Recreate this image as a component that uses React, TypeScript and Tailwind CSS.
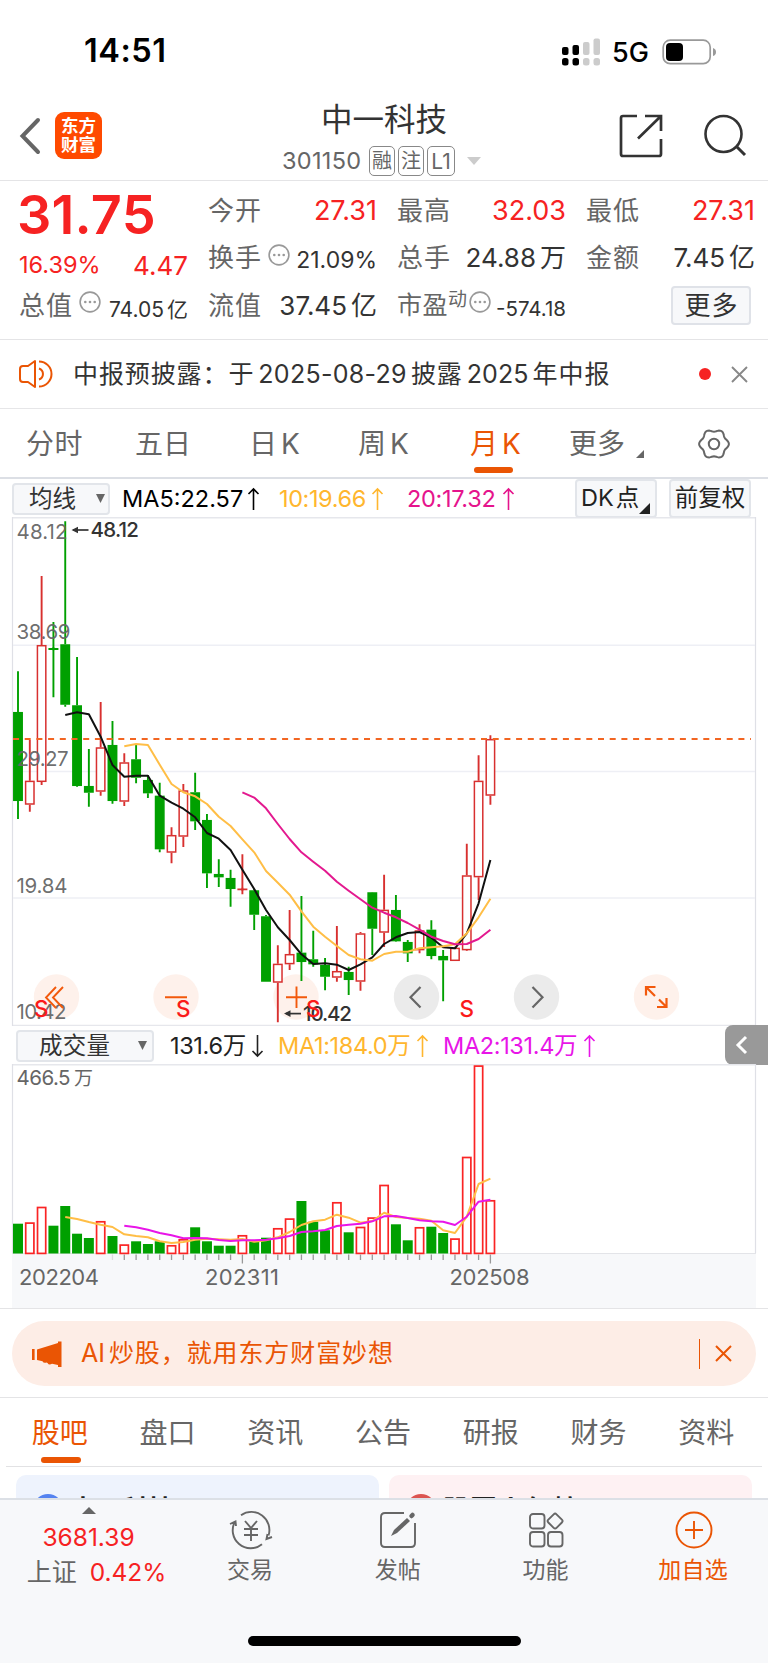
import React from "react";

type Candle = [up: 0 | 1, high: number, top: number, bottom: number, low: number];

const X0 = 18;
const STEP = 11.81;
const UP = "#d8302f";
const DOWN = "#00a000";

const CANDLES: Candle[] = [
  [0, 671.3, 712, 801, 819],
  [1, 740, 780.7, 804.7, 811.7],
  [1, 576, 645, 782, 785],
  [0, 622, 648.3, 649.7, 697.3],
  [0, 521.3, 644.3, 704.7, 706.7],
  [0, 657, 705.3, 786, 786.7],
  [0, 749, 786, 792.7, 806.7],
  [1, 702, 747.3, 791.7, 795.7],
  [0, 721, 745, 801, 803.7],
  [1, 753.3, 762.3, 801.7, 806],
  [0, 745, 759.3, 777.7, 783.3],
  [0, 775, 780, 793.3, 798],
  [0, 782.7, 795.7, 849.3, 852.3],
  [1, 827.3, 835, 852.7, 863.3],
  [1, 784, 790.3, 836.7, 847],
  [0, 772.7, 792.3, 821.3, 830],
  [0, 814, 820, 873.3, 888],
  [0, 859.3, 874, 877.3, 887],
  [0, 869.7, 878, 889, 906.7],
  [1, 854.3, 888.7, 890, 894.3],
  [0, 889, 890.3, 914.7, 930],
  [0, 915, 916.3, 981.7, 981.7],
  [1, 945.3, 963.7, 982.7, 1022.3],
  [1, 910, 954, 964.3, 970],
  [0, 896, 952.7, 962, 981],
  [0, 930.7, 959.3, 964.3, 966.7],
  [0, 958, 965, 976.7, 990.3],
  [1, 926, 971, 977.7, 981.7],
  [0, 966.7, 972, 980, 995],
  [1, 932, 933.3, 981.7, 990.7],
  [0, 892, 892.3, 928.7, 955],
  [1, 874.7, 909.7, 932.7, 947],
  [0, 895, 910, 941.3, 941.7],
  [0, 940, 942, 953.3, 962],
  [1, 924.3, 930.3, 950.3, 953.3],
  [0, 920.3, 929.7, 956, 959.3],
  [0, 950, 956, 960.3, 1001.3],
  [1, 946.7, 947.7, 961, 961],
  [1, 843.7, 875.3, 950.3, 951],
  [1, 755.3, 780.7, 877.3, 900],
  [1, 735.3, 739, 795.7, 804.7],
];

const VOLUMES: [0 | 1, number][] = [
  [0, 1223.7], [1, 1222.3], [1, 1206.7], [0, 1225.7], [0, 1206], [0, 1233.7], [0, 1238],
  [1, 1221], [0, 1236], [1, 1244.3], [0, 1241.3], [0, 1244], [0, 1241.3], [1, 1245],
  [1, 1239], [0, 1227.3], [0, 1241.3], [0, 1245.7], [0, 1245.7], [1, 1235], [0, 1241.3],
  [0, 1237.7], [1, 1228], [1, 1218.3], [0, 1201], [0, 1221.7], [0, 1230.3], [1, 1202],
  [0, 1232.3], [1, 1226.7], [1, 1217.3], [1, 1184.7], [0, 1224.3], [0, 1240.3], [1, 1227],
  [0, 1226.7], [0, 1233], [1, 1238.3], [1, 1156.7], [1, 1065.3], [1, 1200],
];

const MA5 = [
  715, 712.3, 714.3, 736.7, 765, 776.7, 775.7, 775.7, 795.7, 802.7, 808.7, 817.3, 833, 838.7,
  850, 869.7, 889, 910, 927.3, 940, 954.3, 964, 963.3, 964.7, 970, 964.3, 957.3, 944, 937.3,
  933, 932, 937.7, 947.3, 948.3, 933.3, 903.3, 860,
];
const MA10 = [
  746.3, 744, 745, 764.7, 784, 792.3, 796.3, 804, 816.7, 826, 839.3, 852.3, 871, 882.7, 894.7,
  911.3, 926.7, 936.7, 946, 955, 959.3, 960.7, 954, 951.7, 951.7, 948.3, 947.3, 946.3, 944.3,
  933.3, 917.3, 898.7,
];
const MA20 = [
  792.3, 797.6, 808.3, 824, 839, 852.3, 861.7, 870.7, 881.7, 890.7, 899.3, 907.7, 912.7, 917.3,
  923, 929.7, 936.7, 941, 944.3, 944, 939, 929.7,
];
const VMA5 = [
  1217, 1219, 1222, 1224.7, 1227, 1234.3, 1236, 1237.3, 1241.3, 1243, 1242, 1239.7, 1238.7,
  1239.3, 1239.7, 1239, 1241.7, 1240.3, 1237.3, 1232, 1225, 1221.3, 1219.7, 1214.7, 1217.7,
  1222.7, 1221, 1212.7, 1217, 1218, 1218.7, 1220.7, 1230.3, 1233, 1216.7, 1184, 1178.7,
];
const VMA10 = [
  1225.7, 1227.3, 1229.7, 1233, 1235.3, 1238.3, 1238, 1238.3, 1240, 1241, 1240.3, 1240.3,
  1239.7, 1238.3, 1236, 1232, 1231.3, 1230, 1226, 1224.7, 1223.7, 1221.3, 1216.3, 1216, 1218,
  1220.3, 1221.3, 1221.7, 1225, 1216.7, 1201.7, 1199.7,
];

const cx = (i: number) => X0 + i * STEP;

// six-lobed outline of the settings gear
const GEAR = Array.from({ length: 72 }, (_, i) => {
  const a = (i * Math.PI) / 36;
  const r = 13.6 + 1.3 * Math.cos(6 * a);
  return `${(16 + r * Math.cos(a)).toFixed(2)},${(16 + r * Math.sin(a)).toFixed(2)}`;
}).join(" ");

function Line({ data, start, color }: { data: number[]; start: number; color: string }) {
  return (
    <polyline
      points={data.map((y, i) => `${cx(start + i)},${y}`).join(" ")}
      fill="none"
      stroke={color}
      strokeWidth={2}
      strokeLinejoin="round"
    />
  );
}

function Arrow({ down = false }: { down?: boolean }) {
  return (
    <svg width="13" height="24" viewBox="0 0 13 24" className={down ? "rotate-180" : ""}>
      <path d="M6.5 23V2M1.500 7L6.500 2l5 5" fill="none" stroke="currentColor" strokeWidth="1.600" />
    </svg>
  );
}

function Dots() {
  return (
    <svg width="22" height="22" viewBox="0 0 22 22" className="shrink-0">
      <circle cx="11" cy="11" r="9.900" fill="none" stroke="#999" strokeWidth="1.600" />
      <circle cx="6.300" cy="11" r="1.300" fill="#999" />
      <circle cx="11" cy="11" r="1.300" fill="#999" />
      <circle cx="15.700" cy="11" r="1.300" fill="#999" />
    </svg>
  );
}

function StatusBar() {
  return (
    <div className="flex h-[92px] items-center pt-[11px] pl-[84px]">
      <span className="w-[84px] text-[32.5px] leading-none font-semibold tracking-[0.5px] text-black">14:51</span>
      <svg width="40" height="28" viewBox="0 0 40 28" className="ml-[393px]">
        <g fill="#000">
          <rect x="1" y="9" width="6.500" height="8" rx="2" />
          <rect x="11.500" y="7" width="6.500" height="10" rx="2" />
          <rect x="1" y="20" width="6.500" height="7.500" rx="2.500" />
          <rect x="11.500" y="20" width="6.500" height="7.500" rx="2.500" />
        </g>
        <g fill="#ccc">
          <rect x="22" y="4" width="6.500" height="13" rx="2" />
          <rect x="32.500" y="0.500" width="6.500" height="16.500" rx="2" />
          <rect x="22" y="20" width="6.500" height="7.500" rx="2.500" />
          <rect x="32.500" y="20" width="6.500" height="7.500" rx="2.500" />
        </g>
      </svg>
      <span className="ml-[11px] w-[38px] pt-px text-[27px] leading-none font-medium text-black">5G</span>
      <svg width="55" height="26" viewBox="0 0 55 26" className="ml-[12px]">
        <rect x="1.200" y="1.200" width="47" height="23.500" rx="7" fill="none" stroke="#999" strokeWidth="1.700" />
        <rect x="4" y="4" width="17" height="18" rx="4" fill="#000" />
        <path d="M51 9v8q3-1 3-4t-3-4z" fill="#999" />
      </svg>
    </div>
  );
}

function Header() {
  return (
    <header className="flex h-[89px] items-center border-b border-[#e4e4e6]">
      <svg width="24" height="38" viewBox="0 0 24 38" className="ml-[18px]">
        <path d="M20 3L4.500 19 20 35" fill="none" stroke="#666" strokeWidth="4" strokeLinecap="round" />
      </svg>
      <div className="mb-[2px] ml-[13px] flex size-[47px] flex-col items-center justify-center rounded-[9px] bg-[#ff4a00] text-[17.500px] leading-[19.500px] font-bold text-white">
        <span>东方</span>
        <span>财富</span>
      </div>
      <div className="ml-[180px] flex h-full w-[204px] flex-col">
        <h1 className="mt-[10px] text-center text-[31.500px] leading-[35px] text-[#333]">中一科技</h1>
        <div className="mt-[9px] flex h-[30px] items-center text-[#666]">
          <span className="w-[87px] text-[23.500px] leading-none tracking-[0.3px]">301150</span>
          <span className="flex h-[30px] w-[26px] items-center justify-center rounded-[5px] border-[1.500px] border-[#888] text-[20px] leading-none">融</span>
          <span className="ml-[3px] flex h-[30px] w-[26px] items-center justify-center rounded-[5px] border-[1.500px] border-[#888] text-[20px] leading-none">注</span>
          <span className="ml-[3px] flex h-[30px] w-[28px] items-center justify-center rounded-[5px] border-[1.500px] border-[#888] text-[21px] leading-none">L1</span>
          <svg width="14" height="8" viewBox="0 0 14 8" className="ml-[12px] shrink-0">
            <path d="M0 0h14L7 8z" fill="#ccc" />
          </svg>
        </div>
      </div>
      <svg width="44" height="44" viewBox="0 0 44 44" className="ml-[133px]">
        <path d="M18 2H4Q2 2 2 4v36q0 2 2 2h36q2 0 2-2V25M26 2h16v15M42 2L19 24.500" fill="none" stroke="#333" strokeWidth="2.700" />
      </svg>
      <svg width="44" height="44" viewBox="0 0 44 44" className="ml-[40px]">
        <circle cx="20.500" cy="20" r="18" fill="none" stroke="#333" strokeWidth="2.600" />
        <path d="M33 32l9 9" stroke="#333" strokeWidth="3" />
      </svg>
    </header>
  );
}

function Quote() {
  return (
    <section className="grid h-[159px] grid-cols-4 grid-rows-[47px_48px_47px] gap-x-[20px] border-b border-[#e4e4e6] pt-[6px] pr-[13px] pl-[19px] text-[26px] leading-none text-[#333] *:flex *:items-center *:justify-between">
      <div>
        <span className="-ml-[2px] pt-[9px] text-[54px] font-semibold tracking-[0.2px] text-[#f62222]">31.75</span>
      </div>
      <div>
        <span className="tracking-[1px] text-[#666]">今开</span>
        <span className="text-[27px] text-[#f62222]">27.31</span>
      </div>
      <div>
        <span className="tracking-[1px] text-[#666]">最高</span>
        <span className="text-[27px] text-[#f62222]">32.03</span>
      </div>
      <div>
        <span className="tracking-[1px] text-[#666]">最低</span>
        <span className="text-[27px] text-[#f62222]">27.31</span>
      </div>

      <div className="text-[#f62222]">
        <span className="pt-[13px] text-[23.500px]">16.39%</span>
        <span className="pt-[15px]">4.47</span>
      </div>
      <div>
        <span className="flex items-center gap-[6px] tracking-[1px] text-[#666]">换手<i className="mb-[7px]"><Dots /></i></span>
        <span className="pt-[5px] text-[23px]">21.09%</span>
      </div>
      <div>
        <span className="tracking-[1px] text-[#666]">总手</span>
        <span className="flex gap-[4px]">24.88<span>万</span></span>
      </div>
      <div>
        <span className="tracking-[1px] text-[#666]">金额</span>
        <span className="flex gap-[4px]">7.45<span>亿</span></span>
      </div>

      <div>
        <span className="flex items-center gap-[6px] tracking-[1px] text-[#666]">总值<i className="mb-[7px]"><Dots /></i></span>
        <span className="flex gap-[3px] pt-[8px] text-[21px]">74.05<span>亿</span></span>
      </div>
      <div>
        <span className="tracking-[1px] text-[#666]">流值</span>
        <span className="flex gap-[4px]">37.45<span>亿</span></span>
      </div>
      <div>
        <span className="flex items-center text-[25px] tracking-[0.5px] text-[#666]">
          市盈<span className="mr-px mb-[13px] text-[19px]">动</span><i className="mb-[7px]"><Dots /></i>
        </span>
        <span className="pt-[8px] text-[20.500px]">-574.18</span>
      </div>
      <div>
        <span />
        <button className="mr-[4px] h-[39px] w-[80px] rounded-[4px] border-2 border-[#dfe2e8] bg-[#f7f8fa] pl-px tracking-[1px]">更多</button>
      </div>
    </section>
  );
}

function Notice() {
  return (
    <section className="flex h-[69px] items-center border-b border-[#e6e6e8] pl-[19px] text-[25px] leading-none text-[#333]">
      <svg width="34" height="30" viewBox="0 0 34 30" fill="none" stroke="#ea5504" strokeWidth="2">
        <path d="M16 2v26L9 23H4q-3 0-3-3V10q0-3 3-3h5z" strokeLinejoin="round" />
        <path d="M20 2.500a12.500 12.500 0 0 1 0 25M20 9.500a5.800 5.800 0 0 1 0 11" />
      </svg>
      <p className="ml-[20px] flex w-[600px] tracking-[0.900px]">
        <span>中报预披露：于</span>
        <span className="ml-[4px] tracking-[0.300px]">2025-08-29</span>
        <span className="ml-[4px]">披露</span>
        <span className="ml-[4px] tracking-[0.100px]">2025</span>
        <span className="ml-[4px]">年中报</span>
      </p>
      <span className="ml-[26px] size-[12px] rounded-full bg-[#f62222]" />
      <svg width="17" height="17" viewBox="0 0 17 17" className="ml-[20px]">
        <path d="M1 1l15 15M16 1L1 16" stroke="#888" strokeWidth="1.900" />
      </svg>
    </section>
  );
}

function PeriodTabs() {
  return (
    <nav className="flex h-[70px] items-center border-b-2 border-[#dcdfe5] pt-px text-[28px] leading-none text-[#666] *:flex">
      <span className="ml-[26px] w-[109px] tracking-[0.500px]">分时</span>
      <span className="w-[114px]">五日</span>
      <span className="w-[109px] gap-[4px]">日<span>K</span></span>
      <span className="w-[112px] gap-[4px]">周<span>K</span></span>
      <span className="relative w-[99px] gap-[4px] text-[#ea5504]">
        月<span>K</span>
        <i className="absolute top-[37.500px] left-[4px] h-[6px] w-[39px] rounded-full bg-[#ea5504]" />
      </span>
      <span className="w-[129px]">
        更多
        <svg width="8" height="8" viewBox="0 0 8 8" className="mt-[20px] ml-[11px]">
          <path d="M8 0v8H0z" fill="#666" />
        </svg>
      </span>
      <svg width="32" height="32" viewBox="0 0 32 32" fill="none" stroke="#666" strokeWidth="2">
        <polygon points={GEAR} />
        <circle cx="16" cy="16" r="5.200" />
      </svg>
    </nav>
  );
}

function ChartToolbar() {
  return (
    <div className="flex h-[38px] items-center pl-[12px] text-[23.500px] leading-none">
      <button className="mt-px flex h-[32px] w-[98px] items-center rounded-[4px] border-2 border-[#e2e5ea] bg-[#f7f8fa] pl-[15px] text-[#333]">
        均线
        <svg width="9" height="9" viewBox="0 0 9 9" className="ml-[20px]">
          <path d="M0 0h9L4.500 9z" fill="#666" />
        </svg>
      </button>
      <span className="mt-px ml-[12px] flex w-[157px] items-center gap-[4px] text-black">MA5:22.57<Arrow /></span>
      <span className="mt-px flex w-[128px] items-center gap-[5px] tracking-[-0.400px] text-[#ffb62e]">10:19.66<Arrow /></span>
      <span className="mt-px flex w-[168px] items-center gap-[7px] tracking-[-0.300px] text-[#e5148c]">20:17.32<Arrow /></span>
      <button className="flex h-[39px] w-[82px] items-center rounded-[4px] border-2 border-[#e2e5ea] bg-[#f7f8fa] pl-[4px] text-[#222]">
        DK<span className="ml-[2px]">点</span>
        <svg width="11" height="11" viewBox="0 0 11 11" className="mt-[20px]">
          <path d="M11 0v11H0z" fill="#222" />
        </svg>
      </button>
      <button className="ml-[12px] h-[39px] w-[82px] rounded-[4px] border-2 border-[#e2e5ea] bg-[#f7f8fa] text-[#222]">前复权</button>
    </div>
  );
}

function PriceChart() {
  return (
    <svg width="746" height="509" viewBox="11 517 746 509" className="ml-[11px] block shrink-0">
      <path d="M12 517.800H756M12 1025.500H756" stroke="#e6e7ec" strokeWidth="1.600" />
      <path d="M12.500 517V1026M755.500 517V1026" stroke="#dfe0e6" strokeWidth="1.200" />
      <path d="M13 645.300H755M13 771.500H755M13 898H755" stroke="#eeeff5" strokeWidth="1.500" />
      {[56.5, 176, 296, 656.5].map((x) => (
        <circle key={x} cx={x} cy="997" r="22.700" fill="#fef1eb" />
      ))}
      <circle cx="416.500" cy="997" r="22.700" fill="#ebebeb" />
      <circle cx="536.500" cy="997" r="22.700" fill="#ebebeb" />

      {CANDLES.map(([up, high, top, bottom, low], i) => {
        const color = up ? UP : DOWN;
        const thin = bottom - top < 2;
        return (
          <g key={i} stroke={color} strokeWidth="1.900">
            <path d={`M${cx(i)} ${high}V${top}M${cx(i)} ${bottom}V${low}`} />
            {thin ? (
              <path d={`M${cx(i) - 5} ${(top + bottom) / 2}h10M${cx(i)} ${top - 1}v3`} />
            ) : (
              <rect
                x={cx(i) - 4.2}
                y={top + 0.7}
                width="8.400"
                height={bottom - top - 1.4}
                fill={up ? "#fff" : color}
                strokeWidth="1.500"
              />
            )}
          </g>
        );
      })}

      <g fill="#666" fillOpacity="0.950" fontSize="20.500">
        <text x="16.500" y="539" textLength="51">48.12</text>
        <text x="16.500" y="639" textLength="54">38.69</text>
        <text x="16.500" y="765.500" textLength="52">29.27</text>
        <text x="16.500" y="892.500" textLength="51">19.84</text>
        <text x="16.500" y="1018.500" textLength="50">10.42</text>
      </g>

      <path d="M13 739H751" stroke="#f26522" strokeWidth="1.900" strokeDasharray="6 5.700" />
      <Line data={MA5} start={4} color="#111" />
      <Line data={MA10} start={9} color="#ffbe46" />
      <Line data={MA20} start={19} color="#e3198f" />

      <g fill="none" stroke="#333" strokeWidth="1.700">
        <path d="M73 530H88.500" />
        <path d="M286 1013.600H301" />
      </g>
      <path d="M71.500 530l6.500-3.300v6.600zM284 1013.600l6.500-3.300v6.600z" fill="#333" />
      <g fill="#333" fontSize="20.500" fontWeight="500">
        <text x="90.500" y="537" textLength="48.500">48.12</text>
        <text x="303" y="1021" textLength="49">10.42</text>
      </g>

      <g fill="none" stroke="#f2590c" strokeWidth="1.900">
        <path d="M56 987L46 997.500 56 1008M63 987L53 997.500 63 1008" />
        <path d="M165 997.300H187M286 997.300H307M296.500 986.500V1008" />
        <path d="M655 996L647 988M646 995.500V987H655.500M659 999.500L666.500 1007M657 1007H666.500V998" strokeWidth="2.200" />
      </g>
      <g fill="none" stroke="#666" strokeWidth="2.200">
        <path d="M420.500 987L410.500 997.300 420.500 1007.500M532.500 987L542.500 997.300 532.500 1007.500" />
      </g>
      <g fill="#fb1a1a" fontSize="22.500" fontWeight="500">
        <text x="34" y="1017">S</text>
        <text x="176" y="1017">S</text>
        <text x="306" y="1017">S</text>
        <text x="459.500" y="1017">S</text>
      </g>
    </svg>
  );
}

function VolumeToolbar() {
  return (
    <div className="flex h-[38px] items-center pl-[16px] text-[23.500px] leading-none tracking-[-0.350px]">
      <button className="mt-px flex h-[32px] w-[138px] items-center rounded-[4px] border-2 border-[#e2e5ea] bg-[#f7f8fa] pl-[21px] tracking-[0.200px] text-[#333]">
        成交量
        <svg width="9" height="9" viewBox="0 0 9 9" className="ml-[28px]">
          <path d="M0 0h9L4.500 9z" fill="#666" />
        </svg>
      </button>
      <span className="mt-px ml-[16px] flex w-[108px] items-center gap-[5px] text-[#222]">131.6万<Arrow down /></span>
      <span className="mt-px flex w-[165px] items-center gap-[6px] text-[#ffb62e]">MA1:184.0万<Arrow /></span>
      <span className="mt-px flex w-[282px] items-center gap-[6px] text-[#e815e8]">MA2:131.4万<Arrow /></span>
      <span className="flex h-[40px] w-[43px] shrink-0 items-center rounded-l-[8px] bg-[#999] pl-[10px]">
        <svg width="13" height="20" viewBox="0 0 13 20">
          <path d="M11 2L3 10l8 8" fill="none" stroke="#fff" strokeWidth="3" />
        </svg>
      </span>
    </div>
  );
}

function VolumeChart() {
  return (
    <svg width="746" height="244" viewBox="11 1064 746 244" className="ml-[11px] block shrink-0">
      <rect x="12" y="1253.500" width="744" height="55" fill="#f7f8fa" />
      <path d="M12 1064.700H756" stroke="#e6e7ec" strokeWidth="1.500" />
      <path d="M12.500 1064V1253M755.500 1064V1253" stroke="#dfe0e6" strokeWidth="1.200" />
      <path d="M12 1253.500H756" stroke="#e3e4e8" />
      <g fill="#666" fontSize="20.500">
        <text x="16.500" y="1085" textLength="54">466.5</text>
        <text x="74" y="1085" fontSize="19">万</text>
      </g>
      {VOLUMES.map(([up, top], i) =>
        up ? (
          <rect key={i} x={cx(i) - 4.1} y={top + 0.8} width="8.200" height={1252.6 - top} fill="#fff" stroke="#fa2424" strokeWidth="1.700" />
        ) : (
          <rect key={i} x={cx(i) - 5} y={top} width="10" height={1253.5 - top} fill={DOWN} />
        ),
      )}
      <Line data={VMA5} start={4} color="#ffbe46" />
      <Line data={VMA10} start={9} color="#e815e8" />
      {Array.from({ length: 33 }, (_, k) => k + 8).map((i) => (
        <path
          key={i}
          d={`M${cx(i)} 1254.500V${i === 19 || i === 40 ? 1263.5 : 1260}`}
          stroke={i === 8 ? "#ddd" : "#999"}
          strokeWidth="1.300"
        />
      ))}
      <g fill="#666" fontSize="22">
        <text x="19" y="1285" textLength="80">202204</text>
        <text x="205" y="1285" textLength="74">202311</text>
        <text x="449.500" y="1285" textLength="80">202508</text>
      </g>
    </svg>
  );
}

function Banner() {
  return (
    <section className="border-y border-[#e4e4e6] px-[12px] pt-[12px] pb-[11px]">
      <div className="flex h-[65px] items-center rounded-full bg-[#fdede6] pl-[20px] text-[25px] leading-none text-[#ea5504]">
        <svg width="30" height="26" viewBox="0 0 30 26" fill="#ea5504">
          <rect x="0" y="8" width="2.600" height="11" />
          <path d="M5 8.500L26 2V.500h3.500V26H26v-2l-6-1.300q-3 2-4.500-.8l-1-.4q-3 1-4-1.300L5 19z" />
        </svg>
        <span className="ml-[19px]">AI</span>
        <span className="ml-[4px] tracking-[0.900px]">炒股，就用东方财富妙想</span>
        <i className="ml-auto h-[30px] w-[1.500px] bg-[#ea5504]" />
        <svg width="17" height="17" viewBox="0 0 17 17" className="mr-[24px] ml-[15px]">
          <path d="M1 1l15 15M16 1L1 16" stroke="#ea5504" strokeWidth="2" />
        </svg>
      </div>
    </section>
  );
}

const SECTIONS = ["股吧", "盘口", "资讯", "公告", "研报", "财务", "资料"];

function SectionTabs() {
  return (
    <nav className="mx-[6px] flex h-[69px] shrink-0 justify-center border-b border-[#e2e2e4] pr-[2px] text-[28px] leading-none text-[#666]">
      {SECTIONS.map((name, i) => (
        <span key={name} className={`flex w-[108px] flex-col items-center pt-[21px] ${i === 0 ? "text-[#ea5504]" : ""}`}>
          {name}
          {i === 0 && <i className="mt-[10px] ml-[2px] h-[6px] w-[40px] rounded-full bg-[#ea5504]" />}
        </span>
      ))}
    </nav>
  );
}

function Cards() {
  return (
    <div className="flex h-[31px] shrink-0 gap-[10px] overflow-hidden px-[16px] pt-[8px] text-[26px] leading-none font-bold text-[#222]">
      <div className="flex h-[80px] flex-1 rounded-[10px] bg-[#eef3fd] pt-[19px] pl-[17px]">
        <i className="size-[30px] rounded-full bg-[#5482f0]" />
        <span className="mt-[3px] ml-[7px]">中一科技</span>
      </div>
      <div className="flex h-[80px] flex-1 rounded-[10px] bg-[#fef1f3] pt-[19px] pl-[17px]">
        <i className="size-[30px] rounded-full bg-[#dc5450]" />
        <span className="mt-[3px] ml-[7px] tracking-[1.500px]">股票人气榜</span>
      </div>
    </div>
  );
}

function BottomNav() {
  return (
    <footer className="flex h-[165px] shrink-0 flex-col border-t-2 border-[#dce0e6] bg-[#f7f8fa] leading-none text-[#666]">
      <div className="flex text-[23px]">
        <div className="flex w-[177px] flex-col items-center pt-[7px] text-[25px]">
          <svg width="14" height="7" viewBox="0 0 14 7">
            <path d="M0 7h14L7 0z" fill="#666" />
          </svg>
          <span className="mt-[11px] text-[24.500px] text-[#f62222]">3681.39</span>
          <span className="mt-[10px] ml-[16px] flex gap-[13px]">
            上证<span className="text-[24.500px] text-[#f62222]">0.42%</span>
          </span>
        </div>
        <div className="flex flex-1 flex-col items-center pt-[10px]">
          <svg width="44" height="40" viewBox="0 0 44 40" fill="none" stroke="#666" strokeWidth="1.900">
            <path d="M12 5.200A18 18 0 0 1 39.500 25.500M33 34.300A18 18 0 0 1 6 11.500M1 14l5.500-2.500.5 4.500M43 27l-5.500 2 1-5" />
            <path d="M16 11l6 7 6-7M15 19h14M15 25h14M22 18v13" />
          </svg>
          <span className="mt-[9px] -ml-[2px]">交易</span>
        </div>
        <div className="flex flex-1 flex-col items-center pt-[10px]">
          <svg width="40" height="40" viewBox="0 0 40 40" fill="none" stroke="#666" strokeWidth="1.900" className="-ml-[2px]">
            <path d="M26 3H7Q3 3 3 7v26q0 4 4 4h26q4 0 4-4V13" />
            <path d="M13 26l3-6L29 8l3 3-13 12z" fill="#666" stroke="none" />
            <path d="M33.500 6l1-1" strokeWidth="4.500" strokeLinecap="round" />
          </svg>
          <span className="mt-[9px] -ml-[2px]">发帖</span>
        </div>
        <div className="flex flex-1 flex-col items-center pt-[10px]">
          <svg width="40" height="40" viewBox="0 0 40 40" fill="none" stroke="#666" strokeWidth="1.900">
            <rect x="4" y="4" width="14.500" height="14.500" rx="3" />
            <rect x="4" y="22" width="14.500" height="14.500" rx="3" />
            <rect x="22" y="22" width="14.500" height="14.500" rx="3" />
            <rect x="23.300" y="5.300" width="11.600" height="11.600" rx="2" transform="rotate(45 29.100 11.100)" />
          </svg>
          <span className="mt-[9px] -ml-[2px]">功能</span>
        </div>
        <div className="flex flex-1 flex-col items-center pt-[10px] text-[#ea5504]">
          <svg width="40" height="40" viewBox="0 0 40 40" fill="none" stroke="#ea5504" strokeWidth="1.900">
            <circle cx="20" cy="20" r="17.500" />
            <path d="M20 11v18M11 20h18" />
          </svg>
          <span className="mt-[9px] -ml-[2px] tracking-[0.300px]">加自选</span>
        </div>
      </div>
      <i className="mt-auto mb-[17px] ml-[248px] h-[10px] w-[273px] rounded-full bg-black" />
    </footer>
  );
}

export default function App() {
  return (
    <div className="flex h-[1663px] w-[768px] flex-col overflow-hidden bg-white font-['Inter','Noto_Sans_CJK_SC',sans-serif] *:shrink-0">
      <StatusBar />
      <Header />
      <Quote />
      <Notice />
      <PeriodTabs />
      <ChartToolbar />
      <PriceChart />
      <VolumeToolbar />
      <VolumeChart />
      <Banner />
      <SectionTabs />
      <Cards />
      <BottomNav />
    </div>
  );
}
